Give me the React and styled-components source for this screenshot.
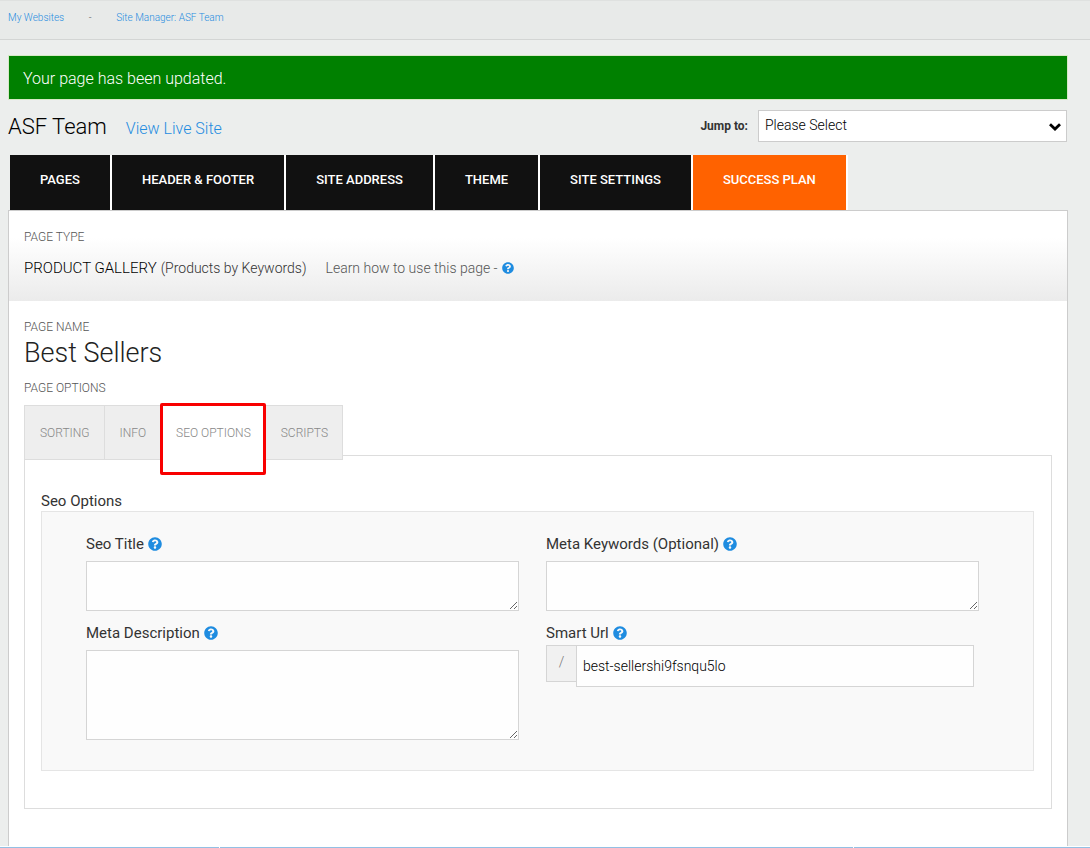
import React, { useState } from "react";
import styled, { createGlobalStyle } from "styled-components";
import { FaQuestionCircle } from "react-icons/fa";

const GlobalStyle = createGlobalStyle`
  * {
    box-sizing: border-box;
  }

  body {
    margin: 0;
    background-color: #eceeed;
    color: #333;
    font-family: Roboto, "Liberation Sans", sans-serif;
    font-size: 15px;
  }
`;

const mainTabs = [
  { label: "Pages" },
  { label: "Header & Footer" },
  { label: "Site Address" },
  { label: "Theme" },
  { label: "Site Settings" },
  { label: "Success Plan", highlight: true },
];

const optionTabs = ["Sorting", "Info", "SEO Options", "Scripts"];

const App = () => {
  const [activeTab, setActiveTab] = useState("SEO Options");

  return (
    <Page>
      <GlobalStyle />
      <Breadcrumbs>
        <CrumbLink href="#websites">My Websites</CrumbLink>
        <CrumbDivider>-</CrumbDivider>
        <CrumbLink href="#manager">Site Manager: ASF Team</CrumbLink>
      </Breadcrumbs>
      <Main>
        <Alert role="status">Your page has been updated.</Alert>
        <TitleRow>
          <SiteHeading>
            <SiteName>ASF Team</SiteName>
            <LiveLink href="#live">View Live Site</LiveLink>
          </SiteHeading>
          <JumpLabel htmlFor="jump">Jump to:</JumpLabel>
          <SelectBox>
            <Select id="jump">
              <option>Please Select</option>
            </Select>
            <Chevron viewBox="0 0 12 8">
              <path d="M1 1.2 L6 6 L11 1.2" />
            </Chevron>
          </SelectBox>
        </TitleRow>
        <MainTabs>
          {mainTabs.map((tab) => (
            <MainTab key={tab.label} href="#tab" $highlight={tab.highlight}>
              {tab.label}
            </MainTab>
          ))}
        </MainTabs>
        <Panel>
          <PageType>
            <Caption>Page Type</Caption>
            <TypeRow>
              <TypeName>PRODUCT GALLERY</TypeName>
              <TypeDetail>(Products by Keywords)</TypeDetail>
              <LearnText>
                Learn how to use this page -
                <HelpLink href="#learn" aria-label="Help" $size={12}>
                  <FaQuestionCircle />
                </HelpLink>
              </LearnText>
            </TypeRow>
          </PageType>
          <PageBody>
            <Caption>Page Name</Caption>
            <PageName>Best Sellers</PageName>
            <Caption>Page Options</Caption>
            <OptionTabs>
              {optionTabs.map((tab) => (
                <OptionTab
                  key={tab}
                  type="button"
                  $active={tab === activeTab}
                  onClick={() => setActiveTab(tab)}
                >
                  {tab}
                </OptionTab>
              ))}
            </OptionTabs>
            <TabContent>
              <GroupTitle>Seo Options</GroupTitle>
              <Group>
                <Column>
                  <Field>
                    <FieldLabel id="title" text="Seo Title" />
                    <TextArea id="title" $height={50} />
                  </Field>
                  <Field>
                    <FieldLabel id="description" text="Meta Description" />
                    <TextArea id="description" $height={90} />
                  </Field>
                </Column>
                <Column>
                  <Field>
                    <FieldLabel id="keywords" text="Meta Keywords (Optional)" />
                    <TextArea id="keywords" $height={50} />
                  </Field>
                  <Field $tight>
                    <FieldLabel id="url" text="Smart Url" />
                    <UrlRow>
                      <UrlPrefix>/</UrlPrefix>
                      <UrlInput id="url" defaultValue="best-sellershi9fsnqu5lo" />
                    </UrlRow>
                  </Field>
                </Column>
              </Group>
            </TabContent>
          </PageBody>
        </Panel>
      </Main>
      <BottomBar>
        <BottomSegment $grow={219} />
        <BottomSegment $grow={633} />
        <BottomSegment $grow={236} />
      </BottomBar>
    </Page>
  );
};

const FieldLabel = ({ id, text }) => (
  <LabelRow>
    <label htmlFor={id}>{text}</label>
    <HelpLink href="#help" aria-label={`Help for ${text}`} $size={14}>
      <FaQuestionCircle />
    </HelpLink>
  </LabelRow>
);

const Page = styled.div`
  display: flex;
  flex-direction: column;
  min-height: 100vh;
`;

const Breadcrumbs = styled.nav`
  display: flex;
  height: 40px;
  padding: 11px 8px;
  background-color: #e8eae9;
  border-top: 1px solid #dfe1e0;
  border-bottom: 1px solid #d3d5d4;
  font-size: 10px;
  font-weight: 300;
  line-height: 12px;
`;

const CrumbLink = styled.a`
  color: #1f8ce0;
  text-decoration: none;
`;

const CrumbDivider = styled.span`
  width: 52px;
  text-align: center;
  color: #666;
`;

const Main = styled.main`
  display: flex;
  flex: 1;
  flex-direction: column;
  padding: 15px 22px 0 8px;
`;

const Alert = styled.div`
  padding: 13px 14px 10px;
  background-color: green;
  border: 1px solid #d6e9c6;
  color: white;
  font-size: 16px;
  font-weight: 300;
  line-height: 20px;
`;

const TitleRow = styled.div`
  display: flex;
  align-items: center;
  height: 54px;
  padding-bottom: 2px;
`;

const SiteHeading = styled.div`
  display: flex;
  align-items: baseline;
  gap: 19px;
`;

const SiteName = styled.h1`
  margin: 0;
  color: black;
  font-size: 22px;
  font-weight: 300;
`;

const LiveLink = styled.a`
  color: #1f8ce0;
  font-size: 16px;
  font-weight: 300;
  text-decoration: none;
`;

const JumpLabel = styled.label`
  margin-left: auto;
  font-size: 12px;
  font-weight: 700;
`;

const SelectBox = styled.div`
  position: relative;
  width: 309px;
  margin: 0 1px 0 10px;
`;

const Select = styled.select`
  display: block;
  appearance: none;
  width: 100%;
  height: 32px;
  padding: 0 24px 2px 6px;
  background-color: white;
  border: 1px solid #ccc;
  border-radius: 0;
  color: black;
  font-family: inherit;
  font-size: 14px;
  font-weight: 300;
`;

/* sits over the right end of the select */
const Chevron = styled.svg`
  position: absolute;
  top: 13px;
  right: 6px;
  width: 12px;
  height: 8px;
  fill: none;
  stroke: black;
  stroke-width: 2.8;
  pointer-events: none;
`;

const MainTabs = styled.nav`
  display: flex;
  padding: 0 2px;
  margin-top: 1px;
`;

const MainTab = styled.a`
  height: 55px;
  padding: 15px 30px;
  background-color: ${({ $highlight }) => ($highlight ? "#ff6200" : "#111")};
  border-right: 2px solid white;
  color: white;
  font-size: 13px;
  font-weight: 500;
  line-height: 20px;
  text-decoration: none;
  text-transform: uppercase;
`;

const Panel = styled.section`
  flex: 1;
  background-color: white;
  border: 1px solid #ccc;
  border-bottom: none;
`;

const PageType = styled.div`
  height: 90px;
  padding: 18px 15px;
  background: linear-gradient(#fff 30%, #ebebeb);
`;

const Caption = styled.div`
  color: #555;
  font-size: 12px;
  font-weight: 300;
  line-height: 16px;
  text-transform: uppercase;
`;

const TypeRow = styled.div`
  display: flex;
  align-items: center;
  margin-top: 13px;
  font-size: 14px;
  font-weight: 300;
  line-height: 20px;
`;

const TypeName = styled.strong`
  color: black;
  font-size: 15px;
  font-weight: 300;
`;

const TypeDetail = styled.span`
  margin-left: 4px;
  color: #333;
`;

const LearnText = styled.span`
  display: flex;
  align-items: center;
  margin-left: 19px;
  color: #555;
`;

const HelpLink = styled.a`
  display: flex;
  margin-left: 4px;
  color: #1f8ce0;
  font-size: ${({ $size }) => $size}px;
`;

const PageBody = styled.div`
  padding: 18px 15px 30px;
`;

const PageName = styled.h2`
  margin: 0 0 9px;
  color: #222;
  font-size: 27px;
  font-weight: 300;
  line-height: 36px;
`;

const OptionTabs = styled.div`
  position: relative;
  display: flex;
  width: max-content;
  height: 55px;
  margin: 9px 0 -5px;
  border: 1px solid #ddd;
`;

const OptionTab = styled.button`
  position: relative;
  z-index: ${({ $active }) => ($active ? 1 : 0)};
  padding: 0 14px 0 15px;
  background-color: ${({ $active }) => ($active ? "white" : "#eee")};
  border: none;
  border-right: 1px solid #ddd;
  color: #888;
  font-family: inherit;
  font-size: 12px;
  font-weight: 300;
  text-transform: uppercase;
  cursor: pointer;

  &:last-child {
    border-right: none;
  }

  /* red frame that marks the open tab */
  &::after {
    content: "";
    display: ${({ $active }) => ($active ? "block" : "none")};
    position: absolute;
    z-index: -1;
    inset: -3px -1px -16px -1px;
    background-color: white;
    border: 3px solid #f80000;
    border-radius: 2px;
  }
`;

const TabContent = styled.div`
  padding: 35px 17px 37px 16px;
  border: 1px solid #ddd;
`;

const GroupTitle = styled.div`
  line-height: 20px;
`;

const Group = styled.div`
  display: grid;
  grid-template-columns: 1fr 1fr;
  gap: 27px;
  padding: 22px 54px 30px 44px;
  background-color: #f9f9f9;
  border: 1px solid #e5e5e5;
`;

const Column = styled.div`
  display: flex;
  flex-direction: column;
  gap: 12px;
`;

const Field = styled.div`
  display: flex;
  flex-direction: column;
  gap: ${({ $tight }) => ($tight ? 2 : 7)}px;
`;

const LabelRow = styled.div`
  display: flex;
  align-items: center;
  line-height: 20px;
`;

const TextArea = styled.textarea`
  display: block;
  width: 100%;
  height: ${({ $height }) => $height}px;
  padding: 6px;
  background-color: #fefefe;
  border: 1px solid #d5d5d5;
  font-family: inherit;
  font-size: 14px;
`;

const UrlRow = styled.div`
  display: flex;
  align-items: flex-start;
  padding-right: 5px;
`;

const UrlPrefix = styled.span`
  width: 30px;
  height: 37px;
  background-color: #f1f1f1;
  border: 1px solid #d5d5d5;
  border-right: none;
  color: #777;
  font-size: 14px;
  font-weight: 300;
  line-height: 32px;
  text-align: center;
`;

const UrlInput = styled.input`
  flex: 1;
  min-width: 0;
  height: 42px;
  padding: 0 6px;
  background-color: #fefefe;
  border: 1px solid #d5d5d5;
  color: black;
  font-family: inherit;
  font-size: 14px;
  font-weight: 300;
`;

const BottomBar = styled.footer`
  display: flex;
  gap: 1px;
  padding-top: 1px;
  background-color: white;
`;

const BottomSegment = styled.div`
  flex: ${({ $grow }) => $grow} 1 0;
  height: 1px;
  background-color: #92c0e4;
`;

export default App;
